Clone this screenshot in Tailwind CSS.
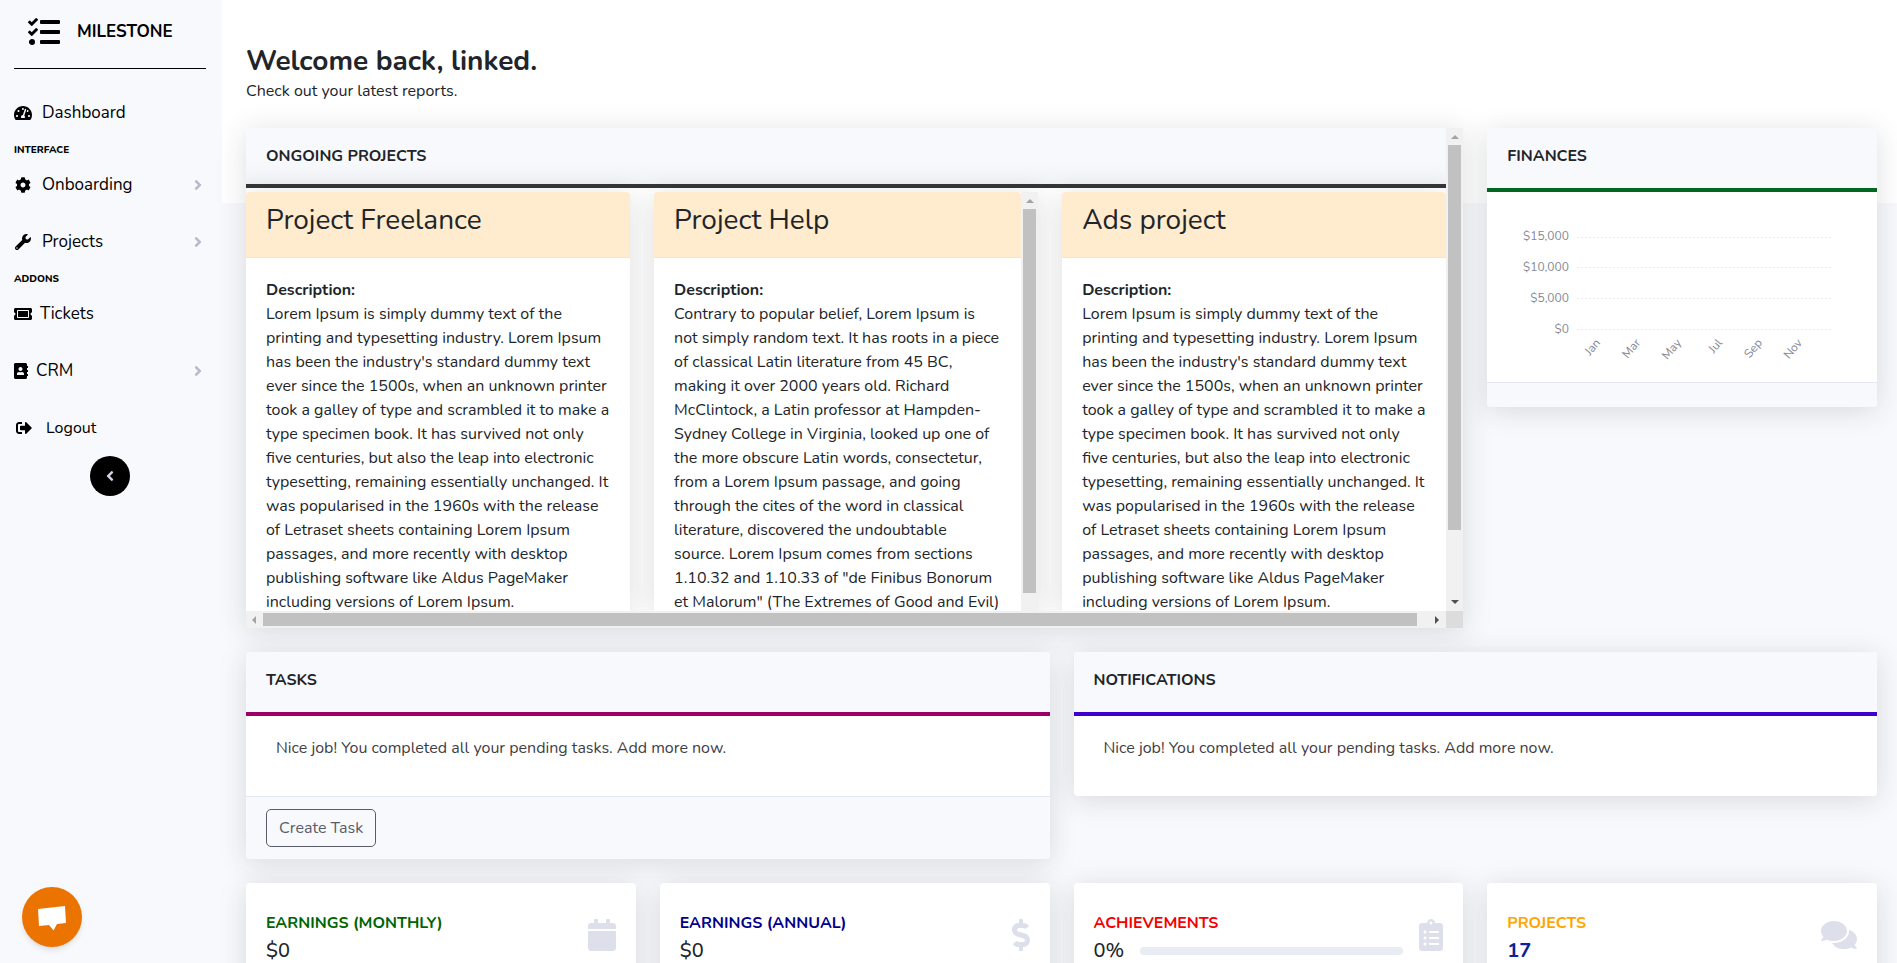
<!DOCTYPE html>
<html lang="en">
<head>
<meta charset="utf-8">
<title>Milestone</title>
<script src="https://cdn.jsdelivr.net/npm/@tailwindcss/browser@4"></script>
</head>
<body class="flex h-screen overflow-hidden bg-[#f8f9fc] font-['Nunito',Lato,sans-serif] text-base leading-6 text-[#212529]">
<svg class="hidden">
  <symbol id="angle" viewBox="0 0 256 512"><path d="M224.3 273l-136 136c-9.4 9.4-24.6 9.4-33.9 0l-22.6-22.6c-9.4-9.4-9.4-24.6 0-33.9l96.4-96.4-96.4-96.4c-9.4-9.4-9.4-24.6 0-33.9L54.3 103c9.4-9.4 24.6-9.4 33.9 0l136 136c9.5 9.4 9.5 24.6.1 34z"/></symbol>
</svg>

<!-- Sidebar -->
<aside class="flex w-[222px] shrink-0 flex-col bg-[#f8f9fc] pr-4 pl-3.5 text-black">
  <a href="#" class="flex h-[68px] items-center gap-[17px] pb-1 pl-3.5 text-[17px] font-bold">
    <svg class="size-8" viewBox="0 0 512 512" fill="currentColor"><path d="M139.61 35.5a12 12 0 0 0-17 0L58.93 98.81l-22.7-22.12a12 12 0 0 0-17 0L3.53 92.41a12 12 0 0 0 0 17l47.59 47.4a12.78 12.78 0 0 0 17.61 0l15.59-15.62L156.52 69a12.09 12.09 0 0 0 .09-17zm0 159.19a12 12 0 0 0-17 0l-63.68 63.72-22.7-22.1a12 12 0 0 0-17 0L3.53 252a12 12 0 0 0 0 17L51 316.5a12.77 12.77 0 0 0 17.6 0l15.7-15.69 72.2-72.22a12 12 0 0 0 .09-16.9zM64 368c-26.49 0-48.59 21.5-48.59 48S37.53 464 64 464a48 48 0 0 0 0-96zm432 16H208a16 16 0 0 0-16 16v32a16 16 0 0 0 16 16h288a16 16 0 0 0 16-16v-32a16 16 0 0 0-16-16zm0-320H208a16 16 0 0 0-16 16v32a16 16 0 0 0 16 16h288a16 16 0 0 0 16-16V80a16 16 0 0 0-16-16zm0 160H208a16 16 0 0 0-16 16v32a16 16 0 0 0 16 16h288a16 16 0 0 0 16-16v-32a16 16 0 0 0-16-16z"/></svg>
    MILESTONE
  </a>
  <hr class="border-black">
  <nav class="flex flex-col text-[17px] leading-6">
    <a href="#" class="mt-8 flex h-6 items-center">
      <svg class="mr-2.5 h-4 w-[18px]" viewBox="0 0 576 512" fill="currentColor"><path d="M288 32C128.94 32 0 160.94 0 320c0 52.8 14.25 102.26 39.06 144.8 5.61 9.62 16.3 15.2 27.44 15.2h443c11.14 0 21.83-5.58 27.44-15.2C561.75 422.26 576 372.8 576 320c0-159.06-128.94-288-288-288zm0 64c14.71 0 26.58 10.13 30.32 23.65-1.11 2.26-2.64 4.23-3.45 6.67l-9.22 27.67c-5.13 3.49-10.97 6.01-17.64 6.01-17.67 0-32-14.33-32-32S270.33 96 288 96zM96 384c-17.67 0-32-14.33-32-32s14.33-32 32-32 32 14.33 32 32-14.33 32-32 32zm48-160c-17.67 0-32-14.33-32-32s14.33-32 32-32 32 14.33 32 32-14.33 32-32 32zm246.77-72.41l-61.33 184C343.13 347.33 352 364.54 352 384c0 11.72-3.38 22.55-8.88 32H232.88c-5.5-9.45-8.88-20.28-8.88-32 0-33.94 26.5-61.43 59.9-63.59l61.34-184.01c4.17-12.56 17.73-19.45 30.36-15.17 12.57 4.19 19.35 17.79 15.17 30.36zm14.66 57.2l15.52-46.55c3.47-1.29 7.13-2.23 11.05-2.23 17.67 0 32 14.33 32 32s-14.33 32-32 32c-11.38-.01-20.89-6.28-26.57-15.22zM480 384c-17.67 0-32-14.33-32-32s14.33-32 32-32 32 14.33 32 32-14.33 32-32 32z"/></svg>
      Dashboard
    </a>
    <h6 class="mt-[17px] text-[10px] leading-4 font-extrabold">INTERFACE</h6>
    <a href="#" class="mt-[15px] flex h-6 items-center">
      <svg class="mr-2.5 h-4 w-[18px]" viewBox="0 0 512 512" fill="currentColor"><path d="M487.4 315.7l-42.6-24.6c4.3-23.2 4.3-47 0-70.2l42.6-24.6c4.9-2.8 7.1-8.6 5.5-14-11.1-35.6-30-67.8-54.7-94.6-3.8-4.1-10-5.1-14.8-2.3L380.8 110c-17.9-15.4-38.5-27.3-60.8-35.1V25.8c0-5.6-3.9-10.5-9.4-11.7-36.7-8.2-74.3-7.8-109.2 0-5.5 1.2-9.4 6.1-9.4 11.7V75c-22.2 7.9-42.8 19.8-60.8 35.1L88.7 85.5c-4.9-2.8-11-1.9-14.8 2.3-24.7 26.7-43.6 58.9-54.7 94.6-1.7 5.4.6 11.2 5.5 14L67.3 221c-4.3 23.2-4.3 47 0 70.2l-42.6 24.6c-4.9 2.8-7.1 8.6-5.5 14 11.1 35.6 30 67.8 54.7 94.6 3.8 4.1 10 5.1 14.8 2.3l42.6-24.6c17.9 15.4 38.5 27.3 60.8 35.1v49.2c0 5.6 3.9 10.5 9.4 11.7 36.7 8.2 74.3 7.8 109.2 0 5.5-1.2 9.4-6.1 9.4-11.7v-49.2c22.2-7.9 42.8-19.8 60.8-35.1l42.6 24.6c4.9 2.8 11 1.9 14.8-2.3 24.7-26.7 43.6-58.9 54.7-94.6 1.5-5.5-.7-11.3-5.6-14.1zM256 336c-44.1 0-80-35.9-80-80s35.9-80 80-80 80 35.9 80 80-35.9 80-80 80z"/></svg>
      Onboarding
      <svg class="mr-1 ml-auto h-4 w-2 text-[#b7b9cc]" fill="currentColor"><use href="#angle"/></svg>
    </a>
    <a href="#" class="mt-[33px] flex h-6 items-center">
      <svg class="mr-2.5 h-4 w-[18px]" viewBox="0 0 512 512" fill="currentColor"><path d="M507.73 109.1c-2.24-9.03-13.54-12.09-20.12-5.51l-74.36 74.36-67.88-11.31-11.31-67.88 74.36-74.36c6.62-6.62 3.43-17.9-5.66-20.16-47.38-11.74-99.55.91-136.58 37.93-39.64 39.64-50.55 97.1-34.05 147.2L18.74 402.76c-24.99 24.99-24.99 65.51 0 90.5 24.99 24.99 65.51 24.99 90.5 0l213.21-213.21c50.12 16.71 107.47 5.68 147.37-34.22 37.07-37.07 49.7-89.32 37.91-136.73zM64 472c-13.25 0-24-10.75-24-24 0-13.26 10.75-24 24-24s24 10.74 24 24c0 13.25-10.75 24-24 24z"/></svg>
      Projects
      <svg class="mr-1 ml-auto h-4 w-2 text-[#b7b9cc]" fill="currentColor"><use href="#angle"/></svg>
    </a>
    <h6 class="mt-[17px] text-[10px] leading-4 font-extrabold">ADDONS</h6>
    <a href="#" class="mt-[15px] flex h-6 items-center">
      <svg class="mr-2 h-4 w-[18px]" viewBox="0 0 576 512" fill="currentColor"><path d="M128 160h320v192H128V160zm400 96c0 26.51 21.49 48 48 48v96c0 26.51-21.49 48-48 48H48c-26.51 0-48-21.49-48-48v-96c26.51 0 48-21.49 48-48s-21.49-48-48-48v-96c0-26.51 21.49-48 48-48h480c26.51 0 48 21.49 48 48v96c-26.51 0-48 21.49-48 48zm-48-104c0-13.255-10.745-24-24-24H120c-13.255 0-24 10.745-24 24v208c0 13.255 10.745 24 24 24h336c13.255 0 24-10.745 24-24V152z"/></svg>
      Tickets
    </a>
    <a href="#" class="mt-[33px] flex h-6 items-center">
      <svg class="mr-2 h-4 w-3.5" viewBox="0 0 448 512" fill="currentColor"><path d="M436 160c6.6 0 12-5.4 12-12v-40c0-6.6-5.4-12-12-12h-20V48c0-26.5-21.5-48-48-48H48C21.5 0 0 21.5 0 48v416c0 26.5 21.5 48 48 48h320c26.5 0 48-21.5 48-48v-48h20c6.6 0 12-5.4 12-12v-40c0-6.6-5.4-12-12-12h-20v-64h20c6.6 0 12-5.4 12-12v-40c0-6.6-5.4-12-12-12h-20v-64h20zm-228-32c35.3 0 64 28.7 64 64s-28.7 64-64 64-64-28.7-64-64 28.7-64 64-64zm112 236.8c0 10.6-10 19.2-22.4 19.2H118.4C106 384 96 375.4 96 364.8v-19.2c0-31.8 30.1-57.6 67.2-57.6h5c12.3 5.1 25.7 8 39.8 8s27.6-2.9 39.8-8h5c37.1 0 67.2 25.8 67.2 57.6v19.2z"/></svg>
      CRM
      <svg class="mr-1 ml-auto h-4 w-2 text-[#b7b9cc]" fill="currentColor"><use href="#angle"/></svg>
    </a>
    <a href="#" class="mt-[33px] flex h-6 items-center text-base leading-6">
      <svg class="mr-3.5 ml-0.5 size-4" viewBox="0 0 512 512" fill="currentColor"><path d="M497 273L329 441c-15 15-41 4.5-41-17v-96H152c-13.3 0-24-10.7-24-24v-96c0-13.3 10.7-24 24-24h136V88c0-21.4 25.9-32 41-17l168 168c9.3 9.4 9.3 24.6 0 34zM192 436v-40c0-6.6-5.4-12-12-12H96c-17.7 0-32-14.3-32-32V160c0-17.7 14.3-32 32-32h84c6.6 0 12-5.4 12-12V76c0-6.6-5.4-12-12-12H96c-53 0-96 43-96 96v192c0 53 43 96 96 96h84c6.6 0 12-5.4 12-12z"/></svg>
      Logout
    </a>
  </nav>
  <button type="button" aria-label="Collapse sidebar" class="mt-4 flex size-10 items-center justify-center self-center rounded-full bg-black text-[#d1d3e2]">
    <svg class="h-4 w-2 rotate-180" fill="currentColor"><use href="#angle"/></svg>
  </button>
</aside>

<!-- Main column: white band behind the heading, grey below -->
<main class="min-w-0 flex-1 bg-[linear-gradient(#fff_203px,#f8f9fc_203px)] pt-11 pr-5 pl-6">
  <h1 class="text-[28px] leading-[35px] font-bold">Welcome back, linked.</h1>
  <p>Check out your latest reports.</p>

  <div class="mt-[25px] grid grid-cols-12 items-start gap-6">
    <!-- Ongoing projects -->
    <section class="col-span-9 grid h-[500px] grid-cols-[minmax(0,1fr)_17px] grid-rows-[minmax(0,1fr)_17px] bg-white shadow-[0_4px_28px_rgba(33,37,41,0.15)]">
      <div class="flex flex-col overflow-hidden">
        <h2 class="h-[60px] shrink-0 border-b-4 border-[#363636] bg-linear-to-b from-[#f8f9fc] from-60% to-[#f1f2f5] px-5 pt-4 text-base font-bold">ONGOING PROJECTS</h2>
        <div class="mt-1 grid min-h-0 flex-1 grid-cols-3 gap-6 whitespace-nowrap">
          <article class="overflow-hidden rounded-t bg-white shadow-[0_4px_28px_rgba(33,37,41,0.15)]">
            <h3 class="h-[66px] border-b border-[#e3e6f0] bg-[#ffebcd] px-5 pt-2.5 text-[28px] leading-9">Project Freelance</h3>
            <div class="px-5 pt-5">
              <h4 class="font-bold">Description:</h4>
              <p>Lorem Ipsum is simply dummy text of the<br>printing and typesetting industry. Lorem Ipsum<br>has been the industry's standard dummy text<br>ever since the 1500s, when an unknown printer<br>took a galley of type and scrambled it to make a<br>type specimen book. It has survived not only<br>five centuries, but also the leap into electronic<br>typesetting, remaining essentially unchanged. It<br>was popularised in the 1960s with the release<br>of Letraset sheets containing Lorem Ipsum<br>passages, and more recently with desktop<br>publishing software like Aldus PageMaker<br>including versions of Lorem Ipsum.</p>
            </div>
          </article>
          <article class="flex overflow-hidden rounded-tl bg-white shadow-[0_4px_28px_rgba(33,37,41,0.15)]">
            <div class="min-w-0 flex-1">
              <h3 class="h-[66px] rounded-tr border-b border-[#e3e6f0] bg-[#ffebcd] px-5 pt-2.5 text-[28px] leading-9">Project Help</h3>
              <div class="px-5 pt-5">
                <h4 class="font-bold">Description:</h4>
                <p>Contrary to popular belief, Lorem Ipsum is<br>not simply random text. It has roots in a piece<br>of classical Latin literature from 45 BC,<br>making it over 2000 years old. Richard<br>McClintock, a Latin professor at Hampden-<br>Sydney College in Virginia, looked up one of<br>the more obscure Latin words, consectetur,<br>from a Lorem Ipsum passage, and going<br>through the cites of the word in classical<br>literature, discovered the undoubtable<br>source. Lorem Ipsum comes from sections<br>1.10.32 and 1.10.33 of "de Finibus Bonorum<br>et Malorum" (The Extremes of Good and Evil)</p>
              </div>
            </div>
            <div class="flex w-[17px] shrink-0 flex-col items-center bg-[#f1f1f1] pb-[18px]">
              <svg class="h-[17px] w-2" viewBox="0 0 8 17" fill="#a3a3a3"><path d="M0 11l4-4 4 4z"/></svg>
              <div class="w-[13px] flex-1 bg-[#c1c1c1]"></div>
            </div>
          </article>
          <article class="overflow-hidden rounded-t bg-white shadow-[0_4px_28px_rgba(33,37,41,0.15)]">
            <h3 class="h-[66px] border-b border-[#e3e6f0] bg-[#ffebcd] px-5 pt-2.5 text-[28px] leading-9">Ads project</h3>
            <div class="px-5 pt-5">
              <h4 class="font-bold">Description:</h4>
              <p>Lorem Ipsum is simply dummy text of the<br>printing and typesetting industry. Lorem Ipsum<br>has been the industry's standard dummy text<br>ever since the 1500s, when an unknown printer<br>took a galley of type and scrambled it to make a<br>type specimen book. It has survived not only<br>five centuries, but also the leap into electronic<br>typesetting, remaining essentially unchanged. It<br>was popularised in the 1960s with the release<br>of Letraset sheets containing Lorem Ipsum<br>passages, and more recently with desktop<br>publishing software like Aldus PageMaker<br>including versions of Lorem Ipsum.</p>
            </div>
          </article>
        </div>
      </div>
      <div class="flex flex-col items-center justify-between bg-[#f1f1f1]">
        <svg class="h-[17px] w-2 shrink-0" viewBox="0 0 8 17" fill="#a3a3a3"><path d="M0 11l4-4 4 4z"/></svg>
        <div class="mb-auto h-[385px] w-[13px] bg-[#c1c1c1]"></div>
        <svg class="h-[17px] w-2 shrink-0" viewBox="0 0 8 17" fill="#505050"><path d="M0 6l4 4 4-4z"/></svg>
      </div>
      <div class="flex items-center bg-[#f1f1f1]">
        <svg class="h-2 w-[17px] shrink-0" viewBox="0 0 17 8" fill="#a3a3a3"><path d="M10 0l-4 4 4 4z"/></svg>
        <div class="mr-3 h-[13px] flex-1 bg-[#c1c1c1]"></div>
        <svg class="h-2 w-[17px] shrink-0" viewBox="0 0 17 8" fill="#505050"><path d="M6 0l4 4-4 4z"/></svg>
      </div>
      <div class="bg-[#dcdcdc]"></div>
    </section>

    <!-- Finances -->
    <section class="col-span-3 overflow-hidden rounded bg-white shadow-[0_4px_28px_rgba(33,37,41,0.15)]">
      <h2 class="h-16 border-b-4 border-[#006621] bg-[#f8f9fc] px-5 pt-4 text-base font-bold">FINANCES</h2>
      <svg class="block h-[190px] w-full" viewBox="0 0 390 190" font-size="12" fill="#858796" role="img" aria-label="Earnings by month">
        <g stroke="#eaecf4" stroke-dasharray="2 2"><path d="M90 45.500H344M90 75.500H344M90 106.500H344M90 137.500H344"/></g>
        <g text-anchor="end"><text x="82" y="48">$15,000</text><text x="82" y="79">$10,000</text><text x="82" y="110">$5,000</text><text x="82" y="141">$0</text></g>
        <g text-anchor="end">
          <text transform="translate(114 151) rotate(-50)">Jan</text><text transform="translate(154 151) rotate(-50)">Mar</text><text transform="translate(195 151) rotate(-50)">May</text><text transform="translate(236 151) rotate(-50)">Jul</text><text transform="translate(276 151) rotate(-50)">Sep</text><text transform="translate(316 151) rotate(-50)">Nov</text>
        </g>
      </svg>
      <div class="h-[25px] border-t border-[#e3e6f0] bg-[#f8f9fc]"></div>
    </section>

    <!-- Tasks -->
    <section class="col-span-6 overflow-hidden rounded bg-white shadow-[0_4px_28px_rgba(33,37,41,0.15)]">
      <h2 class="h-16 border-b-4 border-[#9e0067] bg-[#f8f9fc] px-5 pt-4 text-base font-bold">TASKS</h2>
      <p class="px-[30px] pt-5 pb-9 text-[#3f4045]">Nice job! You completed all your pending tasks. Add more now.</p>
      <div class="border-t border-[#e3e6f0] bg-[#f8f9fc] px-5 py-3">
        <button type="button" class="block h-[38px] rounded-[5px] border border-[#5a5c69] px-3 text-[#5a5c69]">Create Task</button>
      </div>
    </section>

    <!-- Notifications -->
    <section class="col-span-6 overflow-hidden rounded bg-white shadow-[0_4px_28px_rgba(33,37,41,0.15)]">
      <h2 class="h-16 border-b-4 border-[#3f00cd] bg-[#f8f9fc] px-5 pt-4 text-base font-bold">NOTIFICATIONS</h2>
      <p class="px-[30px] pt-5 pb-9 text-[#3f4045]">Nice job! You completed all your pending tasks. Add more now.</p>
    </section>

    <!-- Stat cards -->
    <section class="col-span-3 flex items-start justify-between rounded bg-white px-5 py-7 shadow-[0_4px_28px_rgba(33,37,41,0.15)]">
      <div>
        <h2 class="text-base leading-6 font-bold text-[#006400]">EARNINGS (MONTHLY)</h2>
        <p class="mt-0.5 text-xl leading-7 font-medium">$0</p>
      </div>
      <svg class="mt-2 h-8 w-7 text-[#dddfeb]" viewBox="0 0 448 512" fill="currentColor"><path d="M12 192h424c6.600 0 12 5.400 12 12v260c0 26.500-21.500 48-48 48H48c-26.500 0-48-21.500-48-48V204c0-6.600 5.400-12 12-12zm436-44v-36c0-26.500-21.500-48-48-48h-48V12c0-6.600-5.400-12-12-12h-40c-6.600 0-12 5.400-12 12v52H160V12c0-6.600-5.400-12-12-12h-40c-6.600 0-12 5.400-12 12v52H48C21.500 64 0 85.500 0 112v36c0 6.600 5.400 12 12 12h424c6.600 0 12-5.400 12-12z"/></svg>
    </section>
    <section class="col-span-3 flex items-start justify-between rounded bg-white px-5 py-7 shadow-[0_4px_28px_rgba(33,37,41,0.15)]">
      <div>
        <h2 class="text-base leading-6 font-bold text-[#00008b]">EARNINGS (ANNUAL)</h2>
        <p class="mt-0.5 text-xl leading-7 font-medium">$0</p>
      </div>
      <svg class="mt-2 h-8 w-[18px] text-[#dddfeb]" viewBox="0 0 288 512" fill="currentColor"><path d="M209.2 233.4l-108-31.600C88.700 198.200 80 186.500 80 173.500c0-16.300 13.200-29.500 29.500-29.500h66.300c12.200 0 24.200 3.700 34.200 10.500 6.100 4.100 14.300 3.100 19.500-2l34.800-34c7.100-6.900 6.100-18.400-1.800-24.500C238 74.800 207.400 64.100 176 64V16c0-8.800-7.200-16-16-16h-32c-8.800 0-16 7.200-16 16v48h-2.500C45.800 64-5.400 118.700.5 183.600c4.200 46.100 39.400 83.600 83.800 96.600l102.500 30c12.500 3.700 21.200 15.300 21.200 28.300 0 16.300-13.200 29.500-29.500 29.500h-66.300C100 368 88 364.300 78 357.500c-6.100-4.100-14.300-3.100-19.500 2l-34.800 34c-7.100 6.900-6.100 18.400 1.800 24.500 24.500 19.200 55.100 29.900 86.500 30v48c0 8.800 7.200 16 16 16h32c8.800 0 16-7.200 16-16v-48.200c46.600-.9 90.300-28.600 105.700-72.700 21.500-61.600-14.600-124.800-72.500-141.700z"/></svg>
    </section>
    <section class="col-span-3 flex items-start justify-between rounded bg-white px-5 py-7 shadow-[0_4px_28px_rgba(33,37,41,0.15)]">
      <div class="mr-4 flex-1">
        <h2 class="text-base leading-6 font-bold text-[#f50000]">ACHIEVEMENTS</h2>
        <div class="mt-0.5 flex items-center gap-4">
          <p class="text-xl leading-7 font-medium">0%</p>
          <div role="progressbar" aria-valuenow="0" aria-label="Achievements" class="h-2 flex-1 rounded-full bg-[#eaecf4]"></div>
        </div>
      </div>
      <svg class="mt-2 h-8 w-6 text-[#dddfeb]" viewBox="0 0 384 512" fill="currentColor"><path d="M336 64h-80c0-35.300-28.700-64-64-64s-64 28.700-64 64H48C21.500 64 0 85.500 0 112v352c0 26.500 21.500 48 48 48h288c26.500 0 48-21.500 48-48V112c0-26.500-21.500-48-48-48zM96 424c-13.300 0-24-10.700-24-24s10.700-24 24-24 24 10.700 24 24-10.700 24-24 24zm0-96c-13.300 0-24-10.700-24-24s10.700-24 24-24 24 10.700 24 24-10.700 24-24 24zm0-96c-13.300 0-24-10.700-24-24s10.700-24 24-24 24 10.700 24 24-10.700 24-24 24zm96-192c13.300 0 24 10.700 24 24s-10.700 24-24 24-24-10.700-24-24 10.700-24 24-24zm128 368c0 4.400-3.600 8-8 8H168c-4.400 0-8-3.600-8-8v-16c0-4.400 3.600-8 8-8h144c4.400 0 8 3.600 8 8v16zm0-96c0 4.400-3.600 8-8 8H168c-4.400 0-8-3.600-8-8v-16c0-4.400 3.600-8 8-8h144c4.400 0 8 3.600 8 8v16zm0-96c0 4.400-3.600 8-8 8H168c-4.400 0-8-3.600-8-8v-16c0-4.400 3.600-8 8-8h144c4.400 0 8 3.600 8 8v16z"/></svg>
    </section>
    <section class="col-span-3 flex items-start justify-between rounded bg-white px-5 py-7 shadow-[0_4px_28px_rgba(33,37,41,0.15)]">
      <div>
        <h2 class="text-base leading-6 font-bold text-[#ffa500]">PROJECTS</h2>
        <p class="mt-0.5 text-xl leading-7 font-bold text-[#0a2396]">17</p>
      </div>
      <svg class="mt-2 h-8 w-9 text-[#dddfeb]" viewBox="0 0 576 512" fill="currentColor"><path d="M416 192c0-88.400-93.100-160-208-160S0 103.600 0 192c0 34.300 14.100 65.900 38 92-13.400 30.200-35.500 54.200-35.800 54.500-2.200 2.300-2.800 5.700-1.500 8.700S4.800 352 8 352c36.600 0 66.900-12.300 88.700-25 32.200 15.700 70.300 25 111.300 25 114.900 0 208-71.600 208-160zm122 220c23.900-26 38-57.700 38-92 0-66.900-53.500-124.200-129.300-148.100.9 6.600 1.300 13.300 1.300 20.100 0 105.900-107.700 192-240 192-10.800 0-21.300-.8-31.700-1.900C207.800 439.600 281.800 480 368 480c41 0 79.100-9.200 111.300-25 21.800 12.700 52.100 25 88.700 25 3.200 0 6.100-1.900 7.300-4.800 1.300-2.900.7-6.300-1.500-8.700-.3-.2-22.400-24.200-35.800-54.500z"/></svg>
    </section>
  </div>
</main>

<!-- Chat launcher -->
<button type="button" aria-label="Open chat" class="fixed bottom-4 left-[22px] flex size-[60px] items-center justify-center rounded-full bg-[#eb7300] shadow-md">
  <svg class="size-[30px]" viewBox="0 0 30 30" fill="#fff"><path d="M1 7L28 4l1 17-9 1-3.500 6.500-4.500-5.500-10 1z"/></svg>
</button>
</body>
</html>
